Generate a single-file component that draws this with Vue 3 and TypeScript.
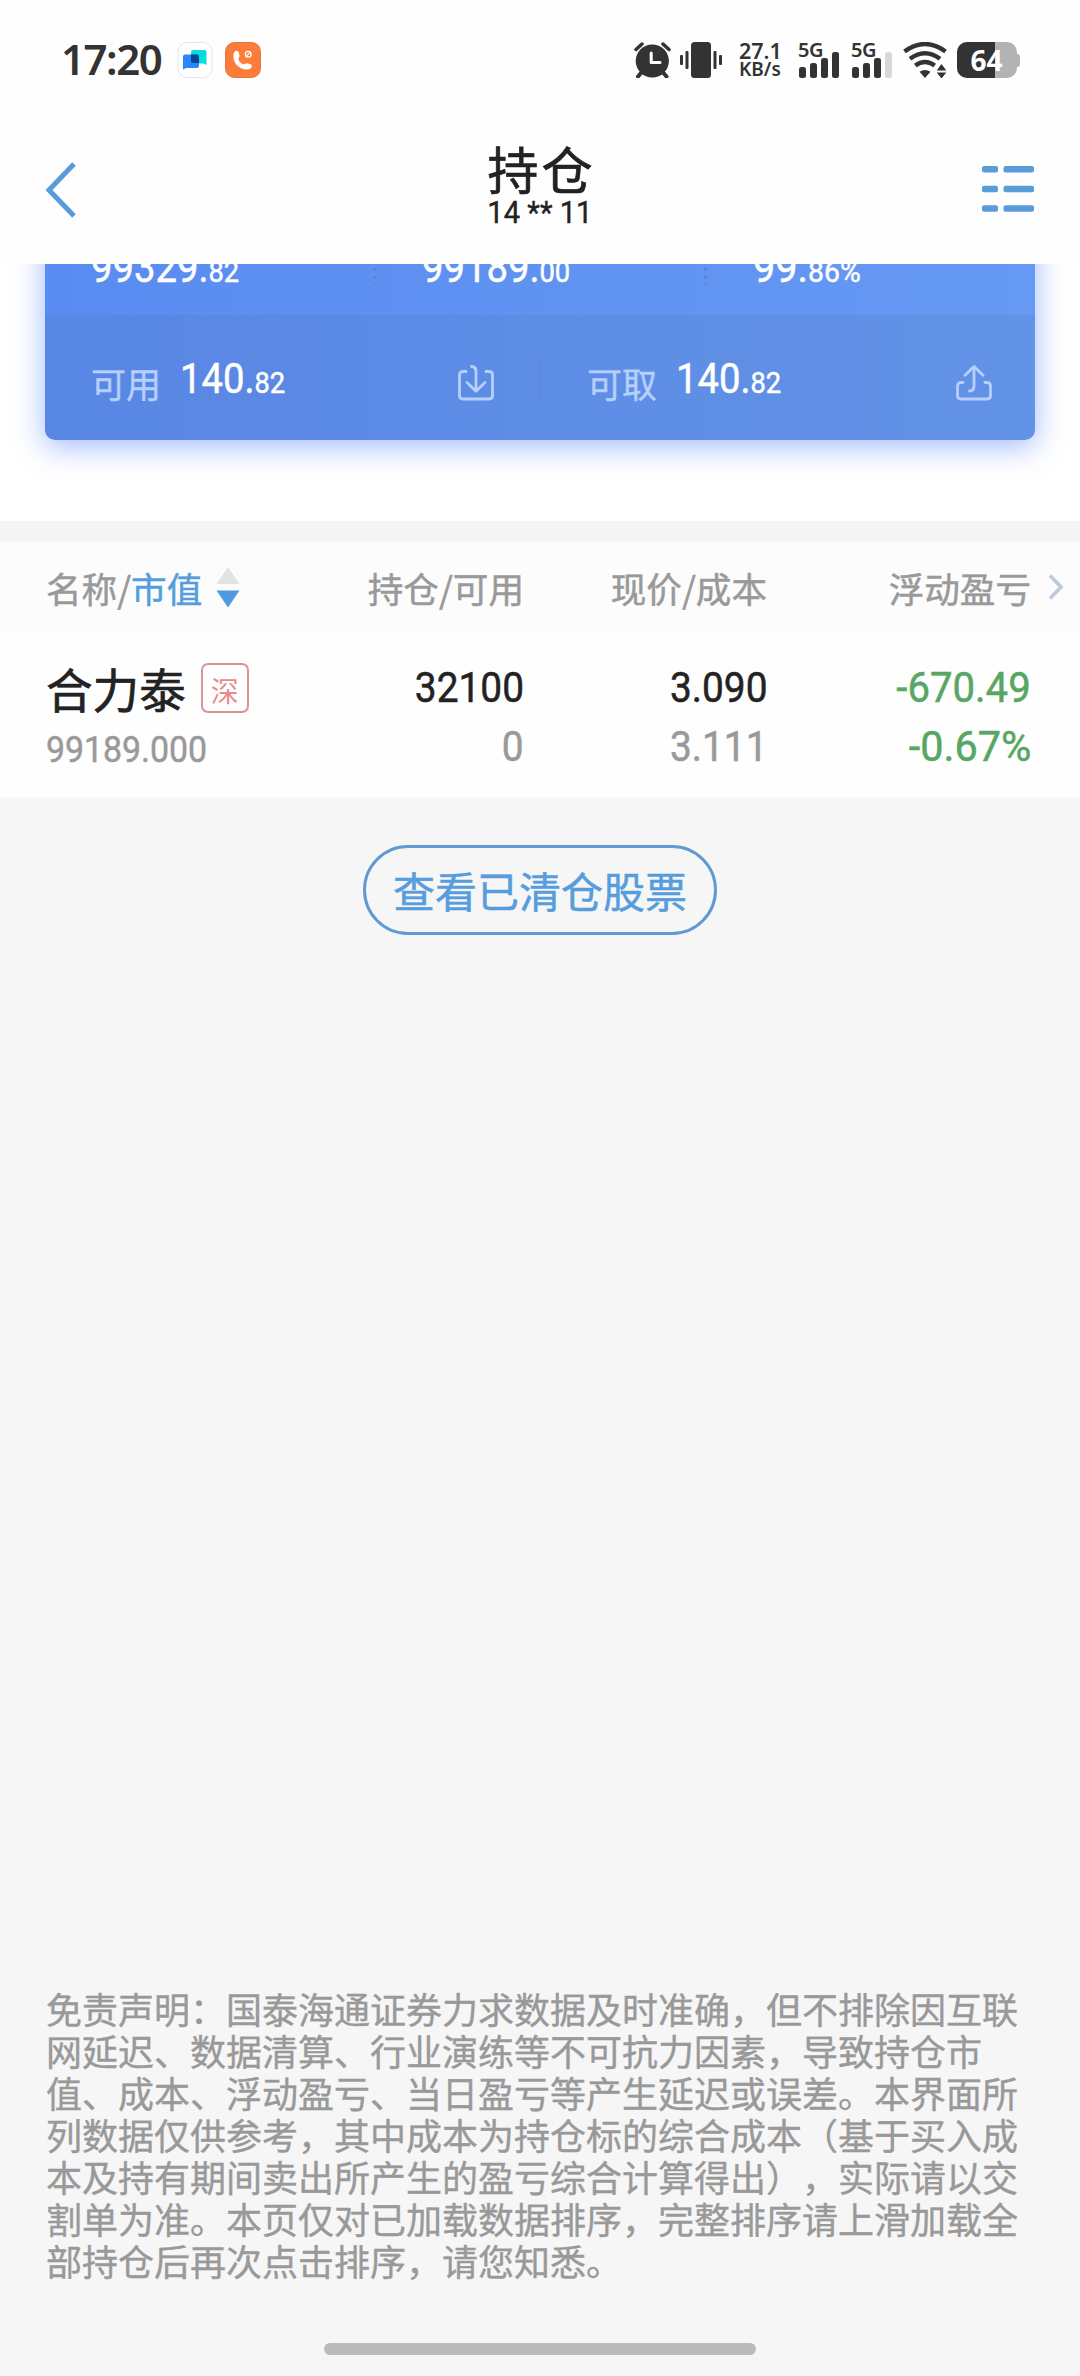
<script setup lang="ts">
interface Figure {
  whole: string
  rest: string
}

const totals: Figure[] = [
  { whole: '99329.', rest: '82' },
  { whole: '99189.', rest: '00' },
  { whole: '99.', rest: '86%' },
]

const disclaimer: string[] = [
  '免责声明：国泰海通证券力求数据及时准确，但不排除因互联',
  '网延迟、数据清算、行业演练等不可抗力因素，导致持仓市',
  '值、成本、浮动盈亏、当日盈亏等产生延迟或误差。本界面所',
  '列数据仅供参考，其中成本为持仓标的综合成本（基于买入成',
  '本及持有期间卖出所产生的盈亏综合计算得出），实际请以交',
  '割单为准。本页仅对已加载数据排序，完整排序请上滑加载全',
  '部持仓后再次点击排序，请您知悉。',
]
</script>

<template>
  <div class="screen">
    <div class="status">
      <span class="clock">17:20</span>
      <svg class="app-chat" width="36" height="36" viewBox="0 0 36 36">
        <rect x="1" y=".5" width="34" height="35" rx="9" fill="#fff" stroke="#e4e4e8" />
        <path d="M14 10q0-2 2-2h11.500q2 0 2 2v13l-3-1.500H16q-2 0-2-2z" fill="#08dbe0" />
        <path d="M6 14.500q0-2 2-2h12q2 0 2 2V24q0 2-2 2H9l-3 1.500z" fill="#2a86fb" />
        <path d="M14 12.500h6q2 0 2 2v6.500h-6q-2 0-2-2z" fill="#04459b" />
      </svg>
      <svg class="app-call" width="36" height="36" viewBox="0 0 36 36">
        <rect x=".5" y=".5" width="35" height="35" rx="9" fill="#fe7c3a" stroke="#e57641" />
        <path d="M9.500 9.700c1.500-1.600 3.900-.9 4.400 1.200l.6 2.800c.3 1.200-1.300 2.100-1.100 3.300.5 2.300 2.500 4.500 5 5.300 1.200.4 2.200-1.200 3.400-1l3.200.7c2 .4 2.500 2.500 1 3.900-1.600 1.600-4.200 2.100-7 1.400C13 25.800 9 21 8.500 15.500c-.2-2.400 0-4.700 1-5.800z" fill="#fff" />
        <circle cx="23.200" cy="12.300" r="2.900" fill="none" stroke="#fff" stroke-width="1.300" />
        <path d="M21.300 14.200l3.800-3.800" stroke="#fff" stroke-width="1.200" />
      </svg>
      <div class="status-right">
        <svg width="37" height="36" viewBox="0 0 37 36">
          <circle cx="18.300" cy="19" r="16.600" fill="#333" />
          <path d="M2 7.500L8 2M35 7.500L29 2" stroke="#333" stroke-width="3.500" stroke-linecap="round" />
          <path d="M7 31l-3 3.500M29.500 31l3 3.500" stroke="#333" stroke-width="4" stroke-linecap="round" />
          <path d="M17.200 11v9.500H26" fill="none" stroke="#fff" stroke-width="3" stroke-linecap="round" stroke-linejoin="round" />
        </svg>
        <svg class="vib" width="42" height="36" viewBox="0 0 42 36" fill="#333">
          <rect x="11" y="0" width="20" height="36" rx="3.500" />
          <rect x="0" y="13" width="3" height="10" rx="1" />
          <rect x="5.500" y="9" width="3" height="18" rx="1" />
          <rect x="33.500" y="9" width="3" height="18" rx="1" />
          <rect x="39" y="13" width="3" height="10" rx="1" />
        </svg>
        <div class="speed"><b>27.1</b><i>KB/s</i></div>
        <div class="signal">
          <span>5G</span>
          <svg width="42" height="26" viewBox="0 0 42 26" fill="#333">
            <rect x="1" y="15" width="7" height="11" rx="2.500" />
            <rect x="12" y="11" width="7" height="15" rx="2.500" />
            <rect x="23" y="6" width="7" height="20" rx="2.500" />
            <rect x="34" y="0" width="7" height="26" rx="2.500" />
          </svg>
        </div>
        <div class="signal second">
          <span>5G</span>
          <svg width="42" height="26" viewBox="0 0 42 26" fill="#333">
            <rect x="1" y="15" width="7" height="11" rx="2.500" />
            <rect x="12" y="11" width="7" height="15" rx="2.500" />
            <rect x="23" y="6" width="7" height="20" rx="2.500" />
            <rect x="34" y="0" width="7" height="26" rx="2.500" fill="#d8d8d8" />
          </svg>
        </div>
        <svg class="wifi" width="44" height="36" viewBox="0 0 44 36">
          <g fill="none" stroke="#333" stroke-width="4.400">
            <path d="M1.500 9.500Q22-5.500 42.500 9.500" />
            <path d="M7 16.800Q22 5.700 37 16.800" />
            <path d="M12.300 23.500Q22 16.300 31.700 23.500" />
          </g>
          <path d="M16.500 29.800Q22 26.200 27.500 29.800L22 36z" fill="#333" />
          <path d="M38.500 22l4.800 6.500h-9.600zM38.500 36.500l4.800-6h-9.600z" fill="#333" />
        </svg>
        <div class="battery">
          <div class="cell"><div class="level"></div><span>64</span></div>
          <div class="nub"></div>
        </div>
      </div>
    </div>

    <div class="nav">
      <svg class="back" width="36" height="60" viewBox="0 0 36 60">
        <path d="M31 4L6 30l25 26" fill="none" stroke="#589bdb" stroke-width="5" />
      </svg>
      <div class="titles">
        <div class="title">持仓</div>
        <div class="account"><span>14 ** 11</span></div>
      </div>
      <svg class="menu" width="53" height="46" viewBox="0 0 53 46" fill="#5a9cda">
        <rect x="0" y="0" width="16" height="6.500" rx="2" /><rect x="21.500" y="0" width="30.500" height="6.500" rx="2" />
        <rect x="0" y="19.700" width="16" height="6.500" rx="2" /><rect x="21.500" y="19.700" width="30.500" height="6.500" rx="2" />
        <rect x="0" y="39.200" width="16" height="6.500" rx="2" /><rect x="21.500" y="39.200" width="30.500" height="6.500" rx="2" />
      </svg>
    </div>

    <div class="summary">
      <div class="card">
        <div class="totals">
          <div v-for="t in totals" :key="t.whole" class="total">
            <span class="num">{{ t.whole }}<small>{{ t.rest }}</small></span>
          </div>
        </div>
        <div class="cash">
          <div class="cash-item">
            <span class="label">可用</span>
            <span class="num">140.<small>82</small></span>
            <svg width="36" height="36" viewBox="0 0 36 36" fill="none" stroke="#b7cffc" stroke-width="2.800" stroke-linecap="round" stroke-linejoin="round">
              <path d="M8 6.500H5Q1.500 6.500 1.500 10v20.500Q1.500 34 5 34h26q3.500 0 3.500-3.500V10q0-3.500-3.500-3.500h-3" />
              <path d="M13.500 1.500q4.500 0 4.500 5V26M9 17.500l9 8.700 9-8.700" />
            </svg>
          </div>
          <div class="rule"></div>
          <div class="cash-item">
            <span class="label">可取</span>
            <span class="num">140.<small>82</small></span>
            <svg width="36" height="36" viewBox="0 0 36 36" fill="none" stroke="#b7cffc" stroke-width="2.800" stroke-linecap="round" stroke-linejoin="round">
              <path d="M7 17.500H5Q1.500 17.500 1.500 21v9.500Q1.500 34 5 34h26q3.500 0 3.500-3.500V21q0-3.500-3.500-3.500h-2" />
              <path d="M13.500 26q4.500 0 4.500-5V2M9 10.300l9-8.700 9 8.700" />
            </svg>
          </div>
        </div>
      </div>
    </div>

    <div class="gap"></div>

    <div class="grid head">
      <div class="c1">名称/<em>市值</em>
        <svg width="24" height="41" viewBox="0 0 24 41">
          <path d="M12 0l11.500 17H.5z" fill="#e1e4e5" />
          <path d="M12 40.500L23.500 23.500H.5z" fill="#4f9ae0" />
        </svg>
      </div>
      <div class="c2">持仓/可用</div>
      <div class="c3">现价/成本</div>
      <div class="c4">浮动盈亏</div>
      <svg class="more" width="16" height="26" viewBox="0 0 16 26">
        <path d="M2 1.500L13 13 2 24.500" fill="none" stroke="#bccad9" stroke-width="3.600" />
      </svg>
    </div>

    <div class="grid stock">
      <div class="c1">
        <div class="name">合力泰<span class="badge">深</span></div>
        <div class="value"><span class="num">99189.000</span></div>
      </div>
      <div class="c2 figures"><span class="num">32100</span><span class="num dim">0</span></div>
      <div class="c3 figures"><span class="num">3.090</span><span class="num dim">3.111</span></div>
      <div class="c4 figures loss"><span class="num">-670.49</span><span class="num">-0.67%</span></div>
    </div>

    <div class="history"><button type="button">查看已清仓股票</button></div>

    <div class="disclaimer">
      <div v-for="line in disclaimer" :key="line">{{ line }}</div>
    </div>
    <div class="home-bar"></div>
  </div>
</template>

<style>
body { margin: 0; background: #f6f6f6; }
</style>

<style scoped>
.screen {
  width: 1080px; height: 2376px; overflow: hidden; box-sizing: border-box;
  display: flex; flex-direction: column; background: #f6f6f6; color: #222;
  font-family: "Noto Sans CJK SC", sans-serif; text-spacing-trim: space-all;
}
.screen svg { display: block; flex: none; }
.status {
  height: 120px; flex: none; background: #fefefe; display: flex; align-items: flex-start;
  box-sizing: border-box; padding: 42px 60px 0 61px; color: #333;
}
.clock {
  width: 116px; height: 36px; font: 600 42px/34px "Noto Sans", sans-serif; letter-spacing: -1.5px;
}
.app-call { margin-left: 12px; }
.status-right { margin-left: auto; display: flex; align-items: flex-start; font-family: "Noto Sans", sans-serif; }
.vib { margin-left: 9px; }
.speed { width: 59px; height: 36px; margin-left: 17px; box-sizing: border-box; white-space: nowrap; }
.speed b { display: block; font: 600 21.500px/17px "Noto Sans", sans-serif; }
.speed i { display: block; font: 600 19px/21px "Noto Sans", sans-serif; }
.signal { width: 43px; height: 36px; display: flex; flex-direction: column; }
.signal span { font: 600 20px/11px "Noto Sans", sans-serif; height: 10px; padding-top: 2px; letter-spacing: -.5px; box-sizing: border-box; }
.second { margin-left: 10px; }
.wifi { margin-left: 9px; }
.battery { display: flex; align-items: center; margin-left: 10px; }
.cell { width: 60px; height: 36px; border-radius: 10px; background: #b3b3b3; overflow: hidden; position: relative; }
.level { width: 38px; height: 36px; background: #333; }
.cell span { position: absolute; left: 0; top: 0; width: 59px; text-align: center; font: 700 28px/36px "Noto Sans", sans-serif; color: #fff; }
.nub { width: 3px; height: 13px; border-radius: 0 3px 3px 0; background: #b3b3b3; }

.nav {
  height: 144px; flex: none; background: #fefefe; display: flex; justify-content: space-between;
  box-sizing: border-box; padding: 0 45px 0 43px; position: relative; z-index: 1;
}
.back { margin-top: 40px; }
.menu { margin-top: 46px; }
.titles { display: flex; flex-direction: column; align-items: center; padding-left: 18px; }
.title { margin-top: 20px; height: 56px; font-size: 51px; line-height: 56px; -webkit-text-stroke: .7px; letter-spacing: 3px; white-space: nowrap; padding-left: 4px; }
.account { font: 400 31px/32px Roboto, sans-serif; height: 32px; margin-top: 1px; white-space: nowrap; -webkit-text-stroke: .4px; }
.account span { display: inline-block; transform: scaleX(.94); }

.summary { height: 257px; flex: none; background: #fff; padding: 0 45px; overflow: hidden; clip-path: inset(0); }
.card {
  height: 276px; margin-top: -100px; border-radius: 10px; overflow: hidden;
  background: linear-gradient(90deg, #5a8bf1, #6699f3); box-shadow: 0 6px 30px rgba(60, 115, 250, .5);
}
.totals { height: 151px; display: flex; color: #fff; }
.total { width: 331px; flex: none; box-sizing: border-box; padding: 80px 0 0 46px; height: 151px; position: relative; }
.total:last-child .num { transform: scaleX(.945); }
.total:not(:last-child)::after {
  content: ""; position: absolute; left: 328px; top: 104px; width: 3px; height: 17px;
  background: repeating-linear-gradient(#5585dd 0 3px, transparent 3px 8px);
}
.num {
  display: inline-block; font: 400 42px/48px Roboto, sans-serif; white-space: nowrap;
  -webkit-text-stroke: .5px; transform: scaleX(.91); transform-origin: left center;
}
.num small { font-size: 30px; }
.cash { height: 125px; background: rgba(80, 110, 150, .13); display: flex; align-items: center; color: #fff; }
.cash-item { display: flex; align-items: center; width: 449px; padding-left: 46px; box-sizing: border-box; }
.cash-item + .rule + .cash-item { width: 451px; padding-left: 45px; }
.cash-item + .rule + .cash-item .num { width: 280px; }
.label { font-size: 35px; line-height: 48px; color: #b7cffc; width: 89px; position: relative; top: 5px; -webkit-text-stroke: .4px; }
.cash-item .num { width: 278px; position: relative; top: 3px; }
.cash-item svg { position: relative; top: 5px; }
.rule { width: 3px; height: 40px; margin: 4px 0 0 45px; background: #5b89e3; }

.gap { height: 21px; flex: none; background: #f5f5f5; }
.grid { display: flex; flex: none; box-sizing: border-box; padding-left: 46px; }
.c1 { width: 240px; }
.c2 { width: 238px; text-align: right; }
.c3 { width: 243px; text-align: right; }
.c4 { width: 264px; text-align: right; }
.head { height: 90px; background: #fcfcfc; font-size: 35.600px; line-height: 93px; color: #999; align-items: center; white-space: nowrap; -webkit-text-stroke: .5px; }
.head .c1 { display: flex; align-items: center; }
.head em { font-style: normal; color: #569ddd; }
.head .c1 svg { margin-left: 14px; }
.more { margin-left: 17px; }
.stock { height: 165px; background: #fefefe; }
.name { display: flex; margin-top: 24px; height: 64px; font-size: 46.600px; line-height: 64px; -webkit-text-stroke: .7px; white-space: nowrap; }
.badge {
  width: 48px; height: 50px; box-sizing: border-box; border: 2px solid #d99496; border-radius: 7px; margin: 7px 0 0 15px;
  font-size: 28px; line-height: 50px; text-align: center; color: #ea8a8c; -webkit-text-stroke: 0;
}
.value { color: #999; height: 48px; margin-top: 6px; }
.value .num { font-size: 36px; transform: scaleX(.94); }
.figures { display: flex; flex-direction: column; align-items: flex-end; padding-top: 32px; }
.figures .num { height: 59px; transform-origin: right center; transform: scaleX(.925); }
.dim { color: #999; }
.loss { color: #57a663; }
.loss .num:first-child { transform: scaleX(.955); }
.loss .num:last-child { transform: scaleX(.985); }

.history { display: flex; justify-content: center; margin-top: 48px; flex: none; }
.history button {
  width: 354px; height: 90px; padding: 0; border: 3px solid #5f9ad2; border-radius: 45px; background: none;
  font: 400 42px/84px "Noto Sans CJK SC", sans-serif; color: #569ddd; white-space: nowrap; -webkit-text-stroke: .5px;
}
.disclaimer { margin: auto 0 0 46px; font-size: 36px; line-height: 42px; color: #999; white-space: nowrap; flex: none; -webkit-text-stroke: .4px; }
.home-bar { width: 432px; height: 12px; border-radius: 6px; background: #bbb; margin: 62px auto 21px; flex: none; }
</style>
